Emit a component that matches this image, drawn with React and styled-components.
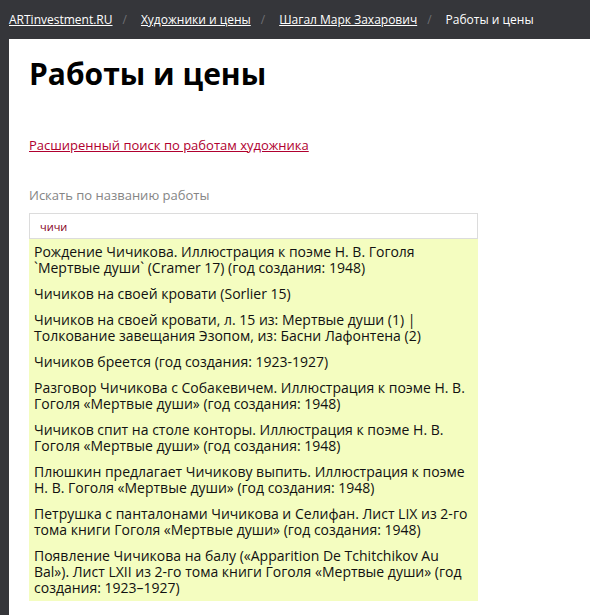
import React, { useState } from 'react';
import styled, { createGlobalStyle } from 'styled-components';

const GlobalStyle = createGlobalStyle`
  html, body {
    margin: 0;
    padding: 0;
    background: #35363a;
    font-family: 'Open Sans', 'Noto Sans', sans-serif;
  }
  * {
    box-sizing: border-box;
  }
`;

const Page = styled.div`
  min-height: 615px;
  display: flex;
  flex-direction: column;
`;

const Breadcrumbs = styled.nav`
  height: 39px;
  display: flex;
  align-items: center;
  padding: 0 0 0 9px;
  font-size: 12px;
  color: #fff;
  white-space: nowrap;
`;

const Crumb = styled.a`
  color: #fff;
  text-decoration: underline;
`;

const Current = styled.span`
  color: #fff;
`;

const Separator = styled.span`
  color: #6f7074;
  margin: 0 14px 0 10px;
`;

const Panel = styled.main`
  flex: 1;
  margin-left: 9px;
  background: #fff;
  padding: 16px 20px 20px 20px;
`;

const Title = styled.h1`
  margin: 0;
  font-size: 30px;
  line-height: 38px;
  font-weight: 700;
  color: #000;
`;

const SearchLink = styled.a`
  display: inline-block;
  margin-top: 43px;
  font-size: 13px;
  line-height: 18px;
  color: #b0002f;
  text-decoration: underline;
`;

const Label = styled.div`
  margin-top: 31px;
  font-size: 13px;
  line-height: 18px;
  color: #858585;
`;

const SearchBox = styled.div`
  margin-top: 9px;
  width: 449px;
`;

const Input = styled.input`
  display: block;
  width: 100%;
  height: 26px;
  border: 1px solid #dcdcdc;
  padding: 0 10px;
  font-family: inherit;
  font-size: 11px;
  color: #850022;
  outline: none;
`;

const Suggestions = styled.ul`
  list-style: none;
  margin: 0;
  padding: 0;
  background: #f4fdc0;
`;

const Suggestion = styled.li`
  padding: 5px 5px;
  font-size: 14px;
  line-height: 16px;
  color: #111;
  cursor: pointer;
`;

const results = [
  'Рождение Чичикова. Иллюстрация к поэме Н. В. Гоголя `Мертвые души` (Cramer 17) (год создания: 1948)',
  'Чичиков на своей кровати (Sorlier 15)',
  'Чичиков на своей кровати, л. 15 из: Мертвые души (1) | Толкование завещания Эзопом, из: Басни Лафонтена (2)',
  'Чичиков бреется (год создания: 1923-1927)',
  'Разговор Чичикова с Собакевичем. Иллюстрация к поэме Н. В. Гоголя «Мертвые души» (год создания: 1948)',
  'Чичиков спит на столе конторы. Иллюстрация к поэме Н. В. Гоголя «Мертвые души» (год создания: 1948)',
  'Плюшкин предлагает Чичикову выпить. Иллюстрация к поэме Н. В. Гоголя «Мертвые души» (год создания: 1948)',
  'Петрушка с панталонами Чичикова и Селифан. Лист LIX из 2-го тома книги Гоголя «Мертвые души» (год создания: 1948)',
  'Появление Чичикова на балу («Apparition De Tchitchikov Au Bal»). Лист LXII из 2-го тома книги Гоголя «Мертвые души» (год создания: 1923–1927)',
];

export default function App() {
  const [query, setQuery] = useState('чичи');

  return (
    <Page>
      <GlobalStyle />
      <Breadcrumbs>
        <Crumb href="#">ARTinvestment.RU</Crumb>
        <Separator>/</Separator>
        <Crumb href="#">Художники и цены</Crumb>
        <Separator>/</Separator>
        <Crumb href="#">Шагал Марк Захарович</Crumb>
        <Separator>/</Separator>
        <Current>Работы и цены</Current>
      </Breadcrumbs>
      <Panel>
        <Title>Работы и цены</Title>
        <SearchLink href="#">Расширенный поиск по работам художника</SearchLink>
        <Label>Искать по названию работы</Label>
        <SearchBox>
          <Input value={query} onChange={(e) => setQuery(e.target.value)} />
          <Suggestions>
            {results.map((item) => (
              <Suggestion key={item}>{item}</Suggestion>
            ))}
          </Suggestions>
        </SearchBox>
      </Panel>
    </Page>
  );
}
